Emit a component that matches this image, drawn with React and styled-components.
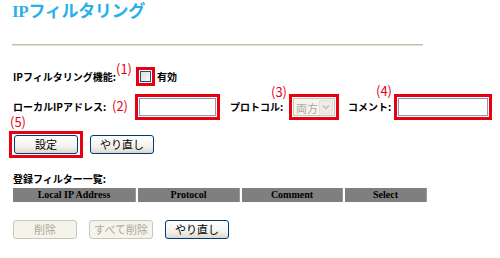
import React from "react";
import styled, { createGlobalStyle } from "styled-components";

const Global = createGlobalStyle`
  html, body { margin: 0; padding: 0; background: #fff; }
  body { font-family: "Noto Sans CJK JP", "Noto Sans", sans-serif; color: #000; }
`;

const Page = styled.div`
  width: 500px;
  height: 258px;
  box-sizing: border-box;
  padding-left: 13px;
  display: flex;
  flex-direction: column;
  align-items: flex-start;
`;

const Title = styled.h1`
  margin: 0 0 0 -1px;
  font-family: "Liberation Serif", "Noto Sans CJK JP", serif;
  font-size: 17px;
  line-height: 24px;
  font-weight: bold;
  color: #2ab0e8;
  letter-spacing: -0.3px;
`;

const Rule = styled.div`
  margin: 20px 0 0 -1px;
  width: 411px;
  height: 0;
  border-top: 1px solid #c2bea9;
  border-bottom: 1px solid #e2e0d6;
`;

const Row = styled.div`
  display: flex;
  align-items: center;
  margin-top: ${(p) => p.$mt}px;
  margin-left: ${(p) => p.$ml || 0}px;
`;

const Label = styled.span`
  font-size: 10px;
  font-weight: bold;
  line-height: 12px;
  white-space: nowrap;
  width: ${(p) => (p.$w ? `${p.$w}px` : "auto")};
  margin-left: ${(p) => p.$ml || 0}px;
  flex: none;
`;

const Mark = styled.span`
  position: relative;
  display: inline-flex;
  align-items: center;
  border: 3px solid #e60012;
  padding: ${(p) => p.$pad || "1px"};
  margin-left: ${(p) => p.$ml || 0}px;
  flex: none;
`;

const Num = styled.span`
  position: absolute;
  top: ${(p) => p.$top}px;
  right: calc(100% + ${(p) => p.$gap + 3}px);
  font-size: 13px;
  line-height: 12px;
  color: #e60012;
  white-space: nowrap;
`;

const Check = styled.input.attrs({ type: "checkbox" })`
  appearance: none;
  margin: 0;
  width: 11px;
  height: 11px;
  box-sizing: border-box;
  border: 1px solid #1c5180;
  background: linear-gradient(135deg, #dcdcd7, #fbfbf9);
`;

const TextBox = styled.input.attrs({ type: "text" })`
  margin: 0;
  box-sizing: border-box;
  width: ${(p) => p.$w}px;
  height: 18px;
  border: 1px solid #7f9db9;
  background: #fff;
  padding: 0 2px;
  font-size: 11px;
  outline: none;
`;

const SelectBox = styled.span`
  display: inline-flex;
  align-items: center;
  box-sizing: border-box;
  width: 42px;
  height: 18px;
  border: 1px solid #c9c7ba;
  background: #f5f4ee;
  padding: 1px;
`;

const Select = styled.select`
  appearance: none;
  border: none;
  background: transparent;
  width: 25px;
  height: 14px;
  padding: 0 0 0 1px;
  margin: 0;
  font-family: "Noto Sans CJK JP", sans-serif;
  font-size: 11px;
  color: #aca899;
  &:disabled { color: #aca899; opacity: 1; }
`;

const Arrow = styled.span`
  display: inline-flex;
  align-items: center;
  justify-content: center;
  box-sizing: border-box;
  width: 14px;
  height: 14px;
  border: 1px solid #e4e2d8;
  background: #eeede5;
`;

const Button = styled.button`
  box-sizing: border-box;
  width: 64px;
  height: 19px;
  margin: 0;
  margin-left: ${(p) => p.$ml || 0}px;
  padding: 0;
  border-radius: 3px;
  font-family: "Noto Sans CJK JP", sans-serif;
  font-size: 11px;
  line-height: 17px;
  color: #000;
  border: 1px solid #003c74;
  background: linear-gradient(#ffffff, #f4f3ee 60%, #dcd8cc);
  flex: none;
  &:disabled {
    color: #aca899;
    border-color: #c9c7ba;
    background: #f5f4ea;
  }
`;

const SectionLabel = styled(Label)`
  margin-top: 15px;
`;

const Table = styled.table`
  margin: 3px 0 0 -2px;
  border-collapse: separate;
  border-spacing: 2px 0;
`;

const Th = styled.th`
  width: ${(p) => p.$w}px;
  height: 14px;
  padding: 0;
  background: #7f7f7f;
  border-right: 1px solid #9a9a9a;
  font-family: "Liberation Serif", serif;
  font-size: 10px;
  font-weight: bold;
  line-height: 14px;
  text-align: center;
  color: #000;
`;

export default function App() {
  return (
    <Page>
      <Global />
      <Title>IPフィルタリング</Title>
      <Rule />

      <Row $mt={21}>
        <Label $w={123}>IPフィルタリング機能:</Label>
        <Mark>
          <Num $gap={4} $top={-7}>(1)</Num>
          <Check />
        </Mark>
        <Label $ml={2}>有効</Label>
      </Row>

      <Row $mt={8}>
        <Label $w={122}>ローカルIPアドレス:</Label>
        <Mark>
          <Num $gap={7} $top={3}>(2)</Num>
          <TextBox $w={77} />
        </Mark>
        <Label $w={59} $ml={10}>プロトコル:</Label>
        <Mark>
          <Num $gap={2} $top={-11}>(3)</Num>
          <SelectBox>
            <Select disabled defaultValue="both">
              <option value="both">両方</option>
            </Select>
            <Arrow>
              <svg width="8" height="6" viewBox="0 0 8 6">
                <path d="M1 1.5 L4 4.5 L7 1.5" fill="none" stroke="#c4c2b8" strokeWidth="1.6" />
              </svg>
            </Arrow>
          </SelectBox>
        </Mark>
        <Label $w={46} $ml={9}>コメント:</Label>
        <Mark>
          <Num $gap={2} $top={-12}>(4)</Num>
          <TextBox $w={90} />
        </Mark>
      </Row>

      <Row $mt={11} $ml={-4}>
        <Mark $pad="1px 2px">
          <Num $gap={-17} $top={-18}>(5)</Num>
          <Button>設定</Button>
        </Mark>
        <Button $ml={7}>やり直し</Button>
      </Row>

      <SectionLabel>登録フィルター一覧:</SectionLabel>
      <Table>
        <thead>
          <tr>
            <Th $w={122}>Local IP Address</Th>
            <Th $w={101}>Protocol</Th>
            <Th $w={100}>Comment</Th>
            <Th $w={81}>Select</Th>
          </tr>
        </thead>
      </Table>

      <Row $mt={18}>
        <Button disabled>削除</Button>
        <Button disabled $ml={12}>すべて削除</Button>
        <Button $ml={12}>やり直し</Button>
      </Row>
    </Page>
  );
}
